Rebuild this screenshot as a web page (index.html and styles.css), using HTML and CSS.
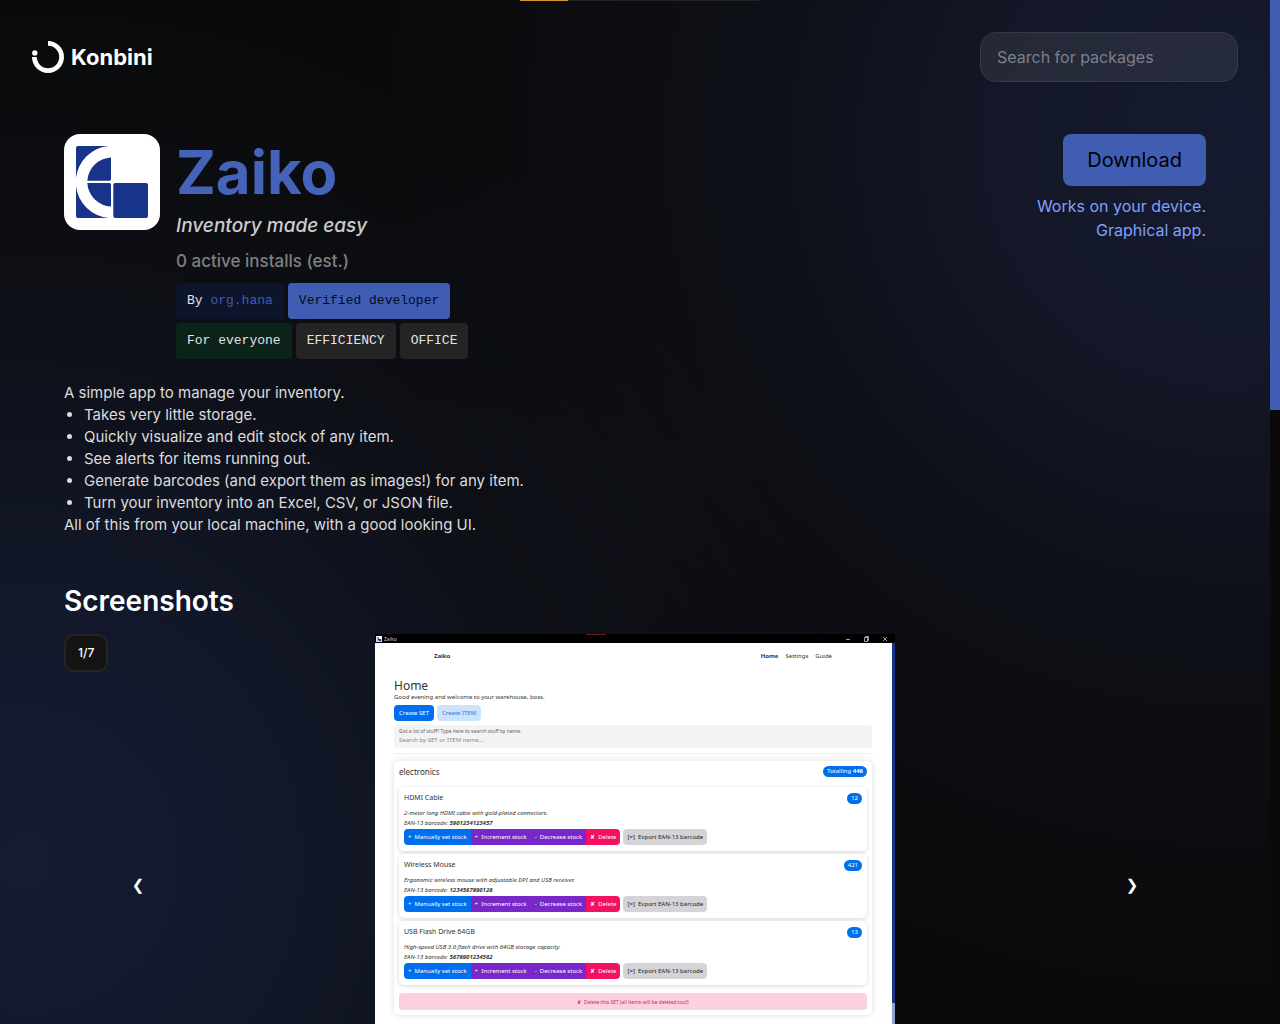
FILE: index.html
```html
<!DOCTYPE html>
<html lang="en">
<head>
<meta charset="utf-8">
<meta name="viewport" content="width=device-width, initial-scale=1">
<title>Zaiko | Konbini</title>
<link rel="stylesheet" href="styles.css">
</head>
<body>
<div class="progress"><div class="progress-fill"></div></div>
<div class="page">
  <header class="header">
    <a class="brand" href="#">
      <svg class="brand-mark" viewBox="0 0 32 32" aria-hidden="true">
        <path d="M16 2.4A13.6 13.6 0 1 1 2.4 16" fill="none" stroke="#fff" stroke-width="4.8"/>
        <circle cx="2.8" cy="12" r="2.7" fill="#fff"/>
      </svg>
      <span class="brand-name">Konbini</span>
    </a>
    <input class="search" type="search" placeholder="Search for packages" aria-label="Search for packages">
  </header>

  <main class="main">
    <section class="hero">
      <svg class="app-icon" viewBox="0 0 96 96" role="img" aria-label="Zaiko icon">
        <rect width="96" height="96" rx="16" fill="#fff"/>
        <g fill="#17348a">
          <path d="M14 12H44.500A36 36 0 0 0 12 44V14a2 2 0 0 1 2-2z"/>
          <path d="M12 52A36 36 0 0 0 44.500 84H14a2 2 0 0 1-2-2z"/>
          <path d="M23.300 46.700A25 25 0 0 1 47 23.400V45a1.700 1.700 0 0 1-1.700 1.700z"/>
          <path d="M23.300 49H45.300a1.700 1.700 0 0 1 1.700 1.700V72.500A25 25 0 0 1 23.300 49z"/>
          <rect x="49.300" y="49" width="34.700" height="35" rx="2"/>
        </g>
      </svg>
      <div class="hero-info">
        <h1 class="title">Zaiko</h1>
        <p class="tagline">Inventory made easy</p>
        <p class="installs">0 active installs (est.)</p>
        <div class="tags">
          <div class="tag-row">
            <span class="tag tag-author">By <a href="#">org.hana</a></span>
            <span class="tag tag-verified">Verified developer</span>
          </div>
          <div class="tag-row">
            <span class="tag tag-age">For everyone</span>
            <span class="tag">EFFICIENCY</span>
            <span class="tag">OFFICE</span>
          </div>
        </div>
      </div>
      <div class="hero-actions">
        <button class="download" type="button">Download</button>
        <p class="support">Works on your device.<br>Graphical app.</p>
      </div>
    </section>

    <section class="description">
      <p>A simple app to manage your inventory.</p>
      <ul>
        <li>Takes very little storage.</li>
        <li>Quickly visualize and edit stock of any item.</li>
        <li>See alerts for items running out.</li>
        <li>Generate barcodes (and export them as images!) for any item.</li>
        <li>Turn your inventory into an Excel, CSV, or JSON file.</li>
      </ul>
      <p>All of this from your local machine, with a good looking UI.</p>
    </section>

    <section>
      <h2 class="section-title">Screenshots</h2>
      <div class="carousel">
        <span class="counter">1/7</span>
        <button class="arrow" type="button" aria-label="Previous">❮</button>
        <div class="shot">
          <div class="shot-bar">
            <svg class="shot-logo" viewBox="0 0 96 96" aria-hidden="true">
              <rect width="96" height="96" fill="#fff"/>
              <path fill="#17348a" d="M12 12H44A36 36 0 0 0 12 44zM12 52A36 36 0 0 0 44 84H12zM23 48A25 25 0 0 1 47 23V49H84V84H49V72A25 25 0 0 1 23 48z"/>
            </svg>
            <span>Zaiko</span>
            <svg class="shot-controls" viewBox="0 0 44 8" fill="none" stroke="#ccc" stroke-width=".8" aria-hidden="true">
              <path d="M1 4.500H5M19.500 2.500h3v4h-3zM20.500 2.500v-1h3v4h-1M38 2l4 4M42 2l-4 4"/>
            </svg>
            <div class="shot-progress"></div>
          </div>
          <div class="shot-body">
            <div class="shot-page">
              <div class="shot-nav"><b>Zaiko</b><nav><b>Home</b><span>Settings</span><span>Guide</span></nav></div>
              <h3 class="shot-title">Home</h3>
              <p class="shot-greeting">Good evening and welcome to your warehouse, boss.</p>
              <div class="shot-create"><button type="button">Create SET</button><button class="soft" type="button">Create ITEM</button></div>
              <div class="shot-search"><label for="shot-q">Got a lot of stuff? Type here to search stuff by name.</label><input id="shot-q" type="text" placeholder="Search by SET or ITEM name..."></div>
              <hr class="shot-rule">
              <div class="set">
                <div class="set-head"><span>electronics</span><span class="pill">Totalling <b>446</b></span></div>
                <article class="item">
                  <div class="item-head"><span>HDMI Cable</span><span class="pill">12</span></div>
                  <p>2-meter long HDMI cable with gold-plated connectors.</p>
                  <p>EAN-13 barcode: <b>5901234123457</b></p>
                  <div class="item-actions"><div class="group"><button class="edit" type="button">+&nbsp; Manually set stock</button><button class="inc" type="button">+&nbsp; Increment stock</button><button class="dec" type="button">-&nbsp; Decrease stock</button><button class="del" type="button">✘&nbsp; Delete</button></div><button class="export" type="button">[=]&nbsp; Export EAN-13 barcode</button></div>
                </article>
                <article class="item">
                  <div class="item-head"><span>Wireless Mouse</span><span class="pill">421</span></div>
                  <p>Ergonomic wireless mouse with adjustable DPI and USB receiver.</p>
                  <p>EAN-13 barcode: <b>1234567890128</b></p>
                  <div class="item-actions"><div class="group"><button class="edit" type="button">+&nbsp; Manually set stock</button><button class="inc" type="button">+&nbsp; Increment stock</button><button class="dec" type="button">-&nbsp; Decrease stock</button><button class="del" type="button">✘&nbsp; Delete</button></div><button class="export" type="button">[=]&nbsp; Export EAN-13 barcode</button></div>
                </article>
                <article class="item">
                  <div class="item-head"><span>USB Flash Drive 64GB</span><span class="pill">13</span></div>
                  <p>High-speed USB 3.0 flash drive with 64GB storage capacity.</p>
                  <p>EAN-13 barcode: <b>5678901234562</b></p>
                  <div class="item-actions"><div class="group"><button class="edit" type="button">+&nbsp; Manually set stock</button><button class="inc" type="button">+&nbsp; Increment stock</button><button class="dec" type="button">-&nbsp; Decrease stock</button><button class="del" type="button">✘&nbsp; Delete</button></div><button class="export" type="button">[=]&nbsp; Export EAN-13 barcode</button></div>
                </article>
                <button class="set-delete" type="button">✘&nbsp; Delete this SET (all items will be deleted too!)</button>
              </div>
            </div>
            <div class="shot-scroll"><div class="shot-thumb"></div></div>
          </div>
        </div>
        <button class="arrow" type="button" aria-label="Next">❯</button>
      </div>
    </section>
  </main>
</div>
<div class="scrollbar"><div class="scrollbar-thumb"></div></div>
</body>
</html>
```
FILE: styles.css
```css
* { box-sizing: border-box; margin: 0; }

body {
  display: flex;
  height: 100vh;
  overflow: hidden;
  color: #fff;
  font-family: Inter, "Liberation Sans", sans-serif;
  background:
    radial-gradient(circle at 96% 14%, #151a2e 0%, rgba(21, 26, 46, .85) 14%, rgba(21, 26, 46, .4) 30%, rgba(21, 26, 46, 0) 56%),
    radial-gradient(circle at 2% 84%, #151c33 0%, rgba(21, 28, 51, .8) 16%, rgba(21, 28, 51, .35) 34%, rgba(21, 28, 51, 0) 56%),
    #0a0a0a;
}

button { padding: 0; border: 0; font: inherit; }

.progress {
  position: fixed;
  top: 0;
  left: 50%;
  width: 240px;
  height: 1px;
  margin-left: -120px;
  background: #222;
}
.progress-fill { width: 20%; height: 100%; background: #d09a2c; }

.page { flex: 1; min-width: 0; overflow: hidden; }
.scrollbar { width: 10px; background: #0a0a0a; }
.scrollbar-thumb { height: 40%; background: #3f5db3; }

.header { display: flex; align-items: center; justify-content: space-between; padding: 32px; }
.brand { display: flex; align-items: center; gap: 7px; color: #fff; text-decoration: none; }
.brand-mark { width: 32px; height: 32px; overflow: visible; }
.brand-name { font-size: 22px; font-weight: 700; line-height: 32px; }
.search {
  width: 258px;
  height: 50px;
  padding: 0 16px;
  border: 1px solid #363a47;
  border-radius: 16px;
  background: rgba(255, 255, 255, .08);
  color: #fff;
  font: 16px Inter, sans-serif;
}
.search::placeholder { color: #7d808a; }

.main { padding: 20px 64px; }
.hero { display: flex; gap: 16px; }
.app-icon { width: 96px; height: 96px; flex: none; }
.hero-info { flex: 1; display: flex; flex-direction: column; gap: 8px; }
.title { margin-bottom: -8px; color: #4663ba; font-size: 60px; font-weight: 700; line-height: 77px; }
.tagline { color: #ccc; font-size: 19px; font-style: italic; font-weight: 500; line-height: 30px; }
.installs { margin-bottom: 2px; color: #808082; font-size: 17px; font-weight: 500; line-height: 24px; }
.tags { display: flex; flex-direction: column; gap: 4px; }
.tag-row { display: flex; gap: 4px; }
.tag {
  padding: 0 11px;
  border-radius: 4px;
  background: #242424;
  color: #e4e4e4;
  font: 13px/36px "Liberation Mono", monospace;
}
.tag a { color: #3f5db3; text-decoration: none; }
.tag-author { background: #0d142b; }
.tag-verified { background: #3f5db3; color: #050a1c; }
.tag-age { background: #0c231a; }

.hero-actions { display: flex; flex-direction: column; align-items: flex-end; gap: 8px; }
.download {
  height: 52px;
  padding: 0 24px;
  border-radius: 8px;
  background: #3f5db3;
  color: #000;
  font-size: 20px;
}
.support { color: #82a0fa; font-size: 16px; line-height: 24px; text-align: right; }

.description { margin-top: 23px; color: #dcdcdc; font-size: 15px; line-height: 22px; }
.description ul { padding-left: 20px; }

.section-title { margin-top: 45px; font-size: 28px; font-weight: 600; line-height: 40px; }
.carousel { position: relative; display: flex; align-items: center; justify-content: space-between; margin-top: 13px; }
.counter {
  position: absolute;
  top: 0;
  left: 0;
  padding: 0 12px;
  border: 2px solid #242424;
  border-radius: 10px;
  background: #141414;
  font-size: 12px;
  font-weight: 500;
  line-height: 34px;
}
.arrow { width: 148px; height: 40px; background: none; color: #fff; font: 15px "DejaVu Sans", sans-serif; }

.shot { width: 520px; height: 502px; display: flex; flex-direction: column; background: #fff; color: #333; font: 6px/10px "Noto Sans", sans-serif; }
.shot-bar { position: relative; display: flex; align-items: center; gap: 2px; height: 9px; padding: 0 6px 0 1px; background: #000; color: #ccc; font-size: 5px; }
.shot-logo { width: 6px; height: 6px; }
.shot-controls { width: 44px; height: 8px; margin-left: auto; }
.shot-progress { position: absolute; top: 0; left: 211px; width: 20px; height: 1px; background: #6b1a1c; }
.shot-body { flex: 1; display: flex; }
.shot-page { flex: 1; padding: 8px 20px 8px 19px; }
.shot-nav { display: flex; justify-content: space-between; padding: 0 40px; }
.shot-nav nav { display: flex; gap: 7px; }
.shot-title { margin-top: 18px; font-size: 12px; font-weight: 400; line-height: 14px; }
.shot-greeting { line-height: 8px; }
.shot-create { display: flex; gap: 3px; margin-top: 4px; }
.shot-create button { height: 16px; padding: 0 5px; border-radius: 4px; background: #006fee; color: #fff; font-size: 6px; }
.shot-create .soft { background: #cce3fd; color: #2c79dc; }
.shot-search { display: flex; flex-direction: column; height: 23px; margin-top: 4px; padding: 3px 5px; border-radius: 4px; background: #f3f3f3; color: #666; font-size: 5px; line-height: 7px; }
.shot-search input { height: 9px; padding: 0; border: 0; background: none; font: inherit; font-size: 6px; }
.shot-search input::placeholder { color: #888; }
.shot-rule { height: 1px; margin: 5px 0 7px; border: 0; background: #eee; }
.set { display: flex; flex-direction: column; gap: 3px; padding: 5px; border-radius: 5px; box-shadow: 0 0 6px rgba(0, 0, 0, .14); }
.set-head, .item-head { display: flex; align-items: center; justify-content: space-between; height: 12px; font-size: 7px; }
.set-head { height: 11px; margin-bottom: 7px; font-size: 8px; }
.pill { padding: 0 4px; border-radius: 6px; background: #006fee; color: #fff; font-size: 6px; line-height: 11px; }
.item { height: 64px; padding: 5px; border-radius: 5px; background: #fff; box-shadow: 0 1px 4px rgba(0, 0, 0, .16); font-style: italic; }
.item-head { margin-bottom: 4px; font-style: normal; }
.item-actions { display: flex; gap: 3px; margin-top: 1px; }
.item-actions button { height: 16px; padding: 0 4px; color: #fff; font-size: 6px; font-style: normal; }
.group { display: flex; border-radius: 4px; overflow: hidden; }
.edit { background: #006fee; }
.inc, .dec { background: #7828c8; }
.del { background: #f31260; }
.item-actions .export { border-radius: 4px; background: #d4d4d8; color: #222; }
.set-delete { height: 17px; margin-top: 5px; border-radius: 4px; background: #fdd0df; color: #c4286a; font-size: 5px; }
.shot-scroll { width: 3px; background: #8fa1cf; }
.shot-thumb { height: 73%; background: #17348a; }
```
